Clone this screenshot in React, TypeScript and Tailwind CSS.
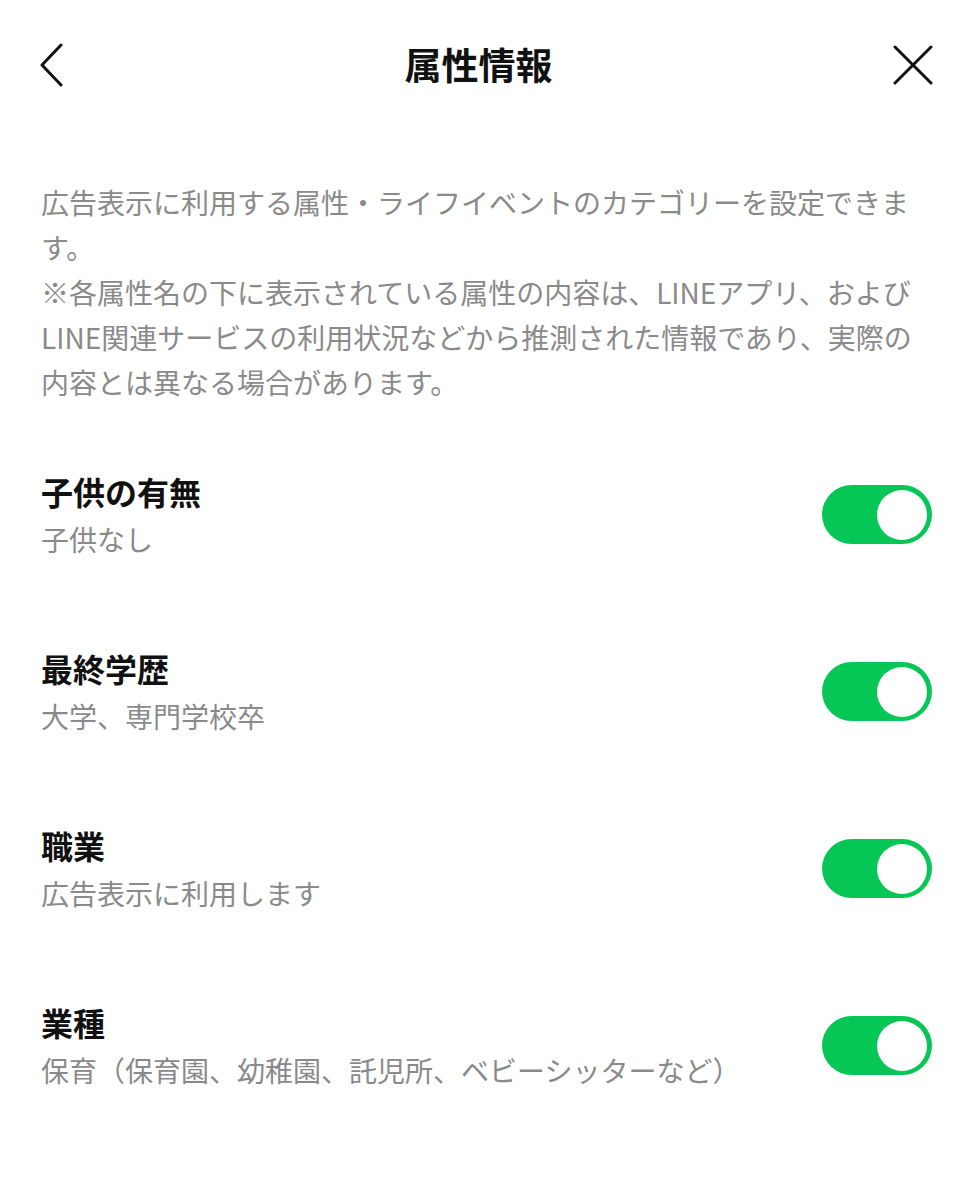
const items = [
  { title: "子供の有無", value: "子供なし" },
  { title: "最終学歴", value: "大学、専門学校卒" },
  { title: "職業", value: "広告表示に利用します" },
  { title: "業種", value: "保育（保育園、幼稚園、託児所、ベビーシッターなど）" },
];

const descLines = [
  "広告表示に利用する属性・ライフイベントのカテゴリーを設定できま",
  "す。",
  "※各属性名の下に表示されている属性の内容は、LINEアプリ、および",
  "LINE関連サービスの利用状況などから推測された情報であり、実際の",
  "内容とは異なる場合があります。",
];

function Toggle() {
  return (
    <div className="flex h-[59px] w-[110px] shrink-0 items-center justify-end rounded-full bg-[#06c755] pr-[5px]">
      <div className="h-[50px] w-[50px] rounded-full bg-white" />
    </div>
  );
}

export default function App() {
  return (
    <div
      className="min-h-[1200px] w-[971px] bg-white"
      style={{ fontFamily: '"Noto Sans CJK JP", "Noto Sans", sans-serif' }}
    >
      {/* header */}
      <div className="flex h-[130px] items-center justify-between px-[38px]">
        <button type="button" aria-label="戻る" className="flex h-[44px] w-[30px] items-center">
          <svg width="26" height="44" viewBox="0 0 26 44" fill="none">
            <path d="M23 2 L4 22 L23 42" stroke="#111" strokeWidth="3" strokeLinecap="round" strokeLinejoin="round" />
          </svg>
        </button>
        <div className="text-[37px] font-bold text-[#111]">属性情報</div>
        <button type="button" aria-label="閉じる" className="flex h-[44px] w-[44px] items-center justify-end">
          <svg width="40" height="40" viewBox="0 0 40 40" fill="none">
            <path d="M2 2 L38 38 M38 2 L2 38" stroke="#111" strokeWidth="3" strokeLinecap="round" />
          </svg>
        </button>
      </div>

      <div className="mt-[50px] px-[41px] text-[28px] leading-[45px] text-[#8a8a8a]">
        {descLines.map((l) => (
          <div key={l} className="whitespace-nowrap">{l}</div>
        ))}
      </div>

      <div className="mt-[21px] flex flex-col">
        {items.map((it) => (
          <div key={it.title} className="flex h-[177px] items-center justify-between pl-[41px] pr-[39px]">
            <div className="flex flex-col gap-[8px]">
              <div className="text-[32px] font-bold leading-[40px] text-[#111]">{it.title}</div>
              <div className="text-[28px] leading-[40px] text-[#8a8a8a]">{it.value}</div>
            </div>
            <Toggle />
          </div>
        ))}
      </div>
    </div>
  );
}
